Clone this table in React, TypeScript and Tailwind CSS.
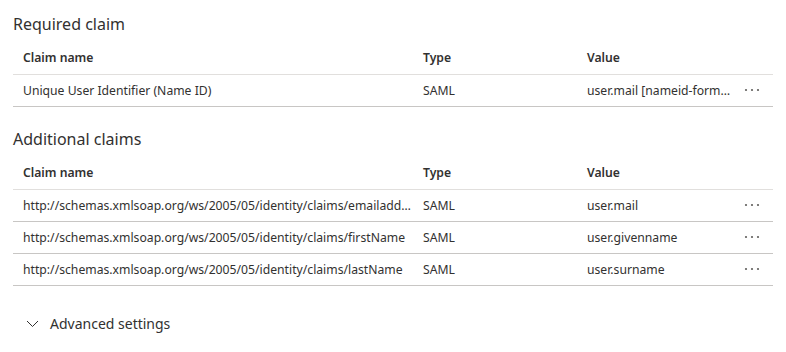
import React from 'react'

type Claim = { name: string; type: string; value: string }

const required: Claim[] = [
  { name: 'Unique User Identifier (Name ID)', type: 'SAML', value: 'user.mail [nameid-format:emailAddress]' },
]

const additional: Claim[] = [
  { name: 'http://schemas.xmlsoap.org/ws/2005/05/identity/claims/emailaddress', type: 'SAML', value: 'user.mail' },
  { name: 'http://schemas.xmlsoap.org/ws/2005/05/identity/claims/firstName', type: 'SAML', value: 'user.givenname' },
  { name: 'http://schemas.xmlsoap.org/ws/2005/05/identity/claims/lastName', type: 'SAML', value: 'user.surname' },
]

const Dots = () => (
  <svg width="16" height="4" viewBox="0 0 16 4" className="text-[#605e5c]">
    <circle cx="2" cy="2" r="1.1" fill="currentColor" />
    <circle cx="8" cy="2" r="1.1" fill="currentColor" />
    <circle cx="14" cy="2" r="1.1" fill="currentColor" />
  </svg>
)

const ClaimTable = ({ title, rows }: { title: string; rows: Claim[] }) => (
  <div>
    <h2 className="text-[16px] leading-[22px] text-[#323130] h-[30px] pt-[13px] box-content">{title}</h2>
    <div className="grid grid-cols-[410px_164px_minmax(0,1fr)] h-[32px] items-center border-b border-[#e1dfdd] font-semibold text-[#323130]">
      <div className="pl-[10px]">Claim name</div>
      <div>Type</div>
      <div>Value</div>
    </div>
    {rows.map((r) => (
      <div key={r.name} className="grid grid-cols-[410px_164px_minmax(0,1fr)] h-[32px] pt-[2px] items-center border-b border-[#c8c6c4] text-[#323130]">
        <div className="pl-[10px] pr-[12px] truncate">{r.name}</div>
        <div>{r.type}</div>
        <div className="flex items-center pr-[13px] min-w-0">
          <span className="truncate flex-1">{r.value}</span>
          <span className="ml-[8px] pb-[3px]"><Dots /></span>
        </div>
      </div>
    ))}
  </div>
)

export default function App() {
  return (
    <div className="w-[786px] h-[352px] bg-white px-[13px] text-[12.2px]" style={{ fontFamily: '"Segoe UI", "Noto Sans", sans-serif' }}>
      <ClaimTable title="Required claim" rows={required} />
      <div className="mt-[8px]">
        <ClaimTable title="Additional claims" rows={additional} />
      </div>
      <div className="flex items-center gap-[11px] mt-[27px] pl-[13px] text-[#323130] text-[14px]">
        <svg width="13" height="8" viewBox="0 0 13 8" fill="none" stroke="#323130" strokeWidth="1">
          <path d="M1 1l5.5 5.5L12 1" />
        </svg>
        <span>Advanced settings</span>
      </div>
    </div>
  )
}
